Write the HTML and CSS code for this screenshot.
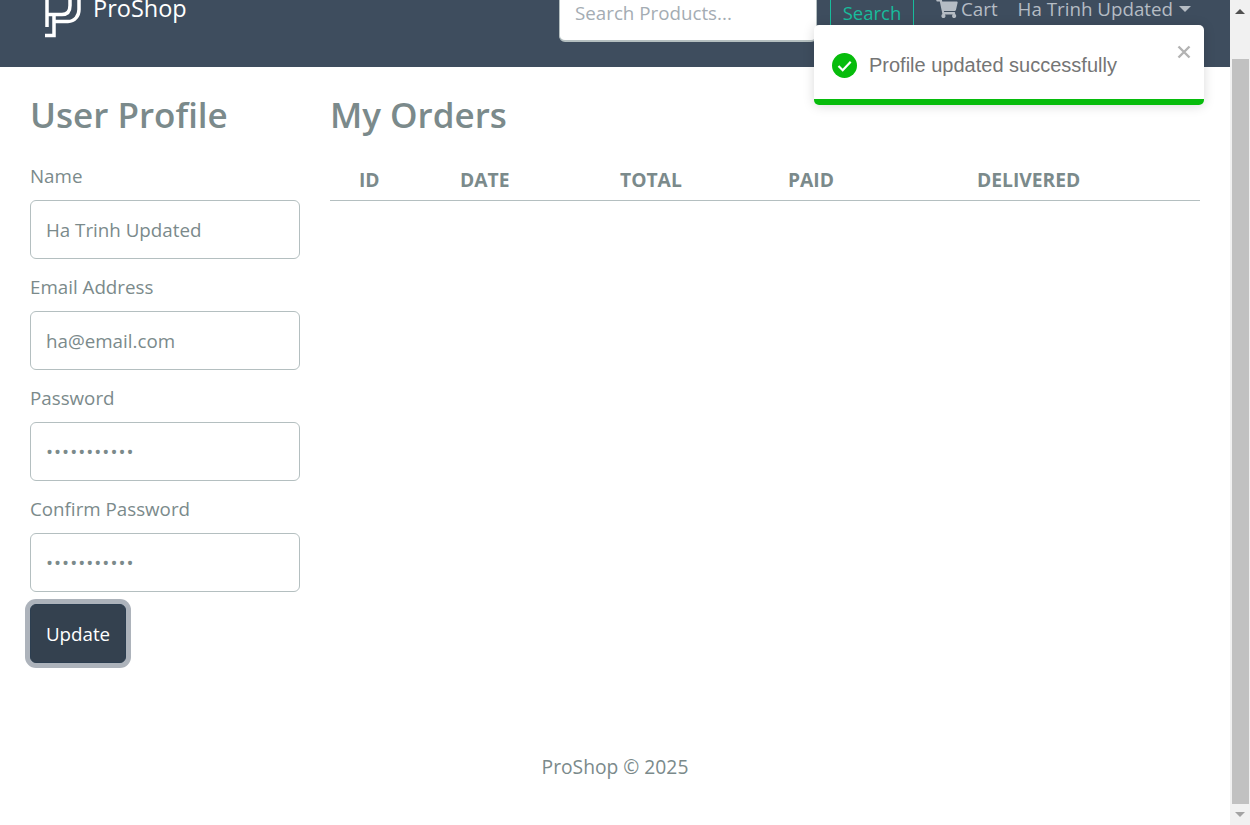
FILE: index.html
```html
<!DOCTYPE html>
<html lang="en">
<head>
  <meta charset="UTF-8">
  <meta name="viewport" content="width=device-width, initial-scale=1.0">
  <title>ProShop</title>
  <link rel="stylesheet" href="styles.css">
</head>
<body>
  <div class="page">
    <header class="navbar">
      <div class="navbar-inner">
        <a class="brand" href="#">
          <svg class="brand-logo" viewBox="0 0 38 38" width="38" height="38" fill="none" stroke="#fff" stroke-width="3.500">
            <path d="M3 0v27" />
            <path d="M3 14.500h15c6 0 8-4 8-9v-6" />
            <path d="M10 14.500v21h-9" />
            <path d="M10 21.500h14c7 0 11-6 11-12v-10" />
          </svg>
          <span class="brand-name">ProShop</span>
        </a>
        <form class="search">
          <input class="search-input" type="text" placeholder="Search Products...">
          <button class="search-btn" type="button">Search</button>
        </form>
        <a class="nav-link cart" href="#">
          <svg viewBox="0 0 576 512" width="22" height="19" fill="#b5bcc4"><path d="M528 301l47-208c3-15-8-29-23-29H159l-9-47C148 7 139 0 128 0H24C11 0 0 11 0 24v16c0 13 11 24 24 24h70l70 343c-17 10-28 28-28 49 0 31 25 56 56 56s56-25 56-56c0-16-6-30-17-40h210c-10 10-17 24-17 40 0 31 25 56 56 56s56-25 56-56c0-22-13-41-32-50l5-24c3-15-8-29-23-29H211l-6-32h294c11 0 21-8 23-19z"/></svg>
          Cart
        </a>
        <a class="nav-link user" href="#">Ha Trinh Updated<span class="caret"></span></a>
      </div>
    </header>

    <main class="content">
      <section class="profile">
        <h2>User Profile</h2>
        <form>
          <div class="field">
            <label>Name</label>
            <input type="text" value="Ha Trinh Updated">
          </div>
          <div class="field">
            <label>Email Address</label>
            <input type="text" value="ha@email.com">
          </div>
          <div class="field">
            <label>Password</label>
            <input type="password" value="password123">
          </div>
          <div class="field">
            <label>Confirm Password</label>
            <input type="password" value="password123">
          </div>
          <button class="update-btn" type="button">Update</button>
        </form>
      </section>

      <section class="orders">
        <h2>My Orders</h2>
        <table>
          <thead>
            <tr>
              <th class="col-id">ID</th>
              <th class="col-date">DATE</th>
              <th class="col-total">TOTAL</th>
              <th class="col-paid">PAID</th>
              <th class="col-delivered">DELIVERED</th>
            </tr>
          </thead>
        </table>
      </section>
    </main>

    <footer class="footer">ProShop &copy; 2025</footer>

    <div class="toast">
      <svg class="toast-icon" viewBox="0 0 25 25" width="25" height="25">
        <circle cx="12.500" cy="12.500" r="12.500" fill="#07bc0c" />
        <path d="M6.500 13l4.200 4.200 8-8.500" fill="none" stroke="#fff" stroke-width="2.200" />
      </svg>
      <span class="toast-text">Profile updated successfully</span>
      <svg class="toast-close" viewBox="0 0 14 14" width="14" height="14">
        <path d="M1.500 1.500l11 11M12.500 1.500l-11 11" stroke="#b3b3b3" stroke-width="2.400" />
      </svg>
      <div class="toast-bar"></div>
    </div>
  </div>

  <div class="scrollbar">
    <span class="arrow-up"></span>
    <div class="scroll-thumb"></div>
    <span class="arrow-down"></span>
  </div>
</body>
</html>
```

FILE: styles.css
```css
html, body {
  height: 100%;
}
body {
  margin: 0;
  display: flex;
  height: 825px;
  overflow: hidden;
  font-family: "Open Sans", "Noto Sans", sans-serif;
  font-size: 18.75px;
  color: #7b8a8b;
  background-color: #fff;
}
.page {
  position: relative;
  flex: 1;
  min-width: 0;
}

/* Navbar, scrolled slightly off the top */
.navbar {
  height: 67px;
  overflow: hidden;
  background-color: #3e4d5e;
}
.navbar-inner {
  display: flex;
  align-items: flex-start;
  margin-top: -17px;
  padding-left: 44px;
}
.brand {
  display: flex;
  align-items: flex-start;
  gap: 11px;
  width: 515px;
  color: #fff;
  font-size: 23.5px;
  text-decoration: none;
}
.brand-logo {
  margin-top: 17px;
}
.brand-name {
  padding-top: 9px;
}
.search {
  display: flex;
}
.search-input {
  width: 258px;
  height: 59px;
  padding: 0 15px;
  box-sizing: border-box;
  border: 1px solid #b4bfc0;
  border-bottom-width: 2px;
  border-radius: 6px;
  font-family: inherit;
  font-size: 18.75px;
  background-color: #fff;
}
.search-input::placeholder {
  color: #a4acb3;
}
.search-btn {
  width: 84px;
  height: 59px;
  margin-left: 13px;
  padding: 0;
  border: 1px solid #18bc9c;
  background: transparent;
  color: #18bc9c;
  font-family: inherit;
  font-size: 18.5px;
}
.nav-link {
  display: flex;
  align-items: center;
  padding-top: 13px;
  color: #b5bcc4;
  text-decoration: none;
}
.cart {
  gap: 3px;
  margin-left: 22px;
}
.user {
  margin-left: 20px;
}
.caret {
  margin-left: 6px;
  border-top: 6px solid #b5bcc4;
  border-left: 6px solid transparent;
  border-right: 6px solid transparent;
}

/* Main columns */
.content {
  display: flex;
  height: 601px;
  padding: 19px 30px 0;
  gap: 30px;
}
.profile {
  width: 270px;
  flex-shrink: 0;
}
.orders {
  flex: 1;
}
h2 {
  margin: 0 0 19px;
  font-size: 35px;
  font-weight: 600;
  line-height: 57px;
}
.field {
  margin-bottom: 14px;
}
.field:last-of-type {
  margin-bottom: 0;
}
.field label {
  display: block;
  height: 38px;
  line-height: 28px;
}
.field input {
  display: block;
  width: 100%;
  height: 59px;
  padding: 0 15px;
  box-sizing: border-box;
  border: 1px solid #b4bfc0;
  border-radius: 6px;
  font-family: inherit;
  font-size: 18.75px;
  color: #7b8a8b;
}
.field input[type="password"] {
  letter-spacing: 1px;
}
.update-btn {
  display: block;
  width: 96px;
  height: 59px;
  margin-top: 12px;
  border: 1px solid #2c3e50;
  border-radius: 6px;
  background-color: #34414f;
  box-shadow: 0 0 0 5px #adb3bb;
  color: #fff;
  font-family: inherit;
  font-size: 18.75px;
}
table {
  width: 100%;
  border-collapse: collapse;
}
th {
  height: 38px;
  padding: 0 0 2px;
  box-sizing: border-box;
  text-align: left;
  font-size: 19.25px;
  font-weight: 700;
  border-bottom: 1px solid #b4bfc0;
}
.col-id { width: 130px; padding-left: 29px; }
.col-date { width: 160px; }
.col-total { width: 168px; }
.col-paid { width: 189px; }

.footer {
  text-align: center;
  margin-top: 67px;
  line-height: 26px;
  font-size: 19.25px;
}

/* Toast sits over the navbar */
.toast {
  position: absolute;
  top: 25px;
  left: 814px;
  display: flex;
  align-items: center;
  width: 390px;
  height: 80px;
  box-sizing: border-box;
  padding: 0 18px;
  overflow: hidden;
  border-radius: 5px;
  background-color: #fff;
  box-shadow: 0 1px 12px rgba(0, 0, 0, 0.15);
}
.toast-text {
  margin-left: 12px;
  font-family: "Liberation Sans", Arial, sans-serif;
  font-size: 20px;
  color: #757575;
}
.toast-close {
  position: absolute;
  top: 20px;
  right: 13px;
}
.toast-bar {
  position: absolute;
  left: 0;
  right: 0;
  bottom: 0;
  height: 6px;
  background-color: #07bc0c;
}

/* Fake browser scrollbar */
.scrollbar {
  display: flex;
  flex-direction: column;
  align-items: center;
  width: 20px;
  flex-shrink: 0;
  background-color: #f1f1f1;
}
.arrow-up, .arrow-down {
  border-left: 5px solid transparent;
  border-right: 5px solid transparent;
}
.arrow-up {
  margin-top: 9px;
  border-bottom: 5px solid #505050;
}
.arrow-down {
  margin-top: 8px;
  border-top: 5px solid #a3a3a3;
}
.scroll-thumb {
  width: 17px;
  height: 745px;
  margin-top: 45px;
  background-color: #c1c1c1;
}
```
